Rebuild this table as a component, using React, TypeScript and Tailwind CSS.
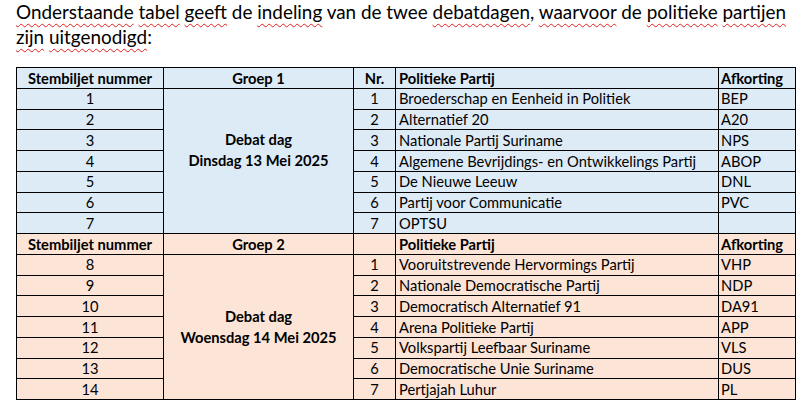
import React from 'react';

type Row = { nr: number; party: string; abbr: string };

const group1: Row[] = [
  { nr: 1, party: 'Broederschap en Eenheid in Politiek', abbr: 'BEP' },
  { nr: 2, party: 'Alternatief 20', abbr: 'A20' },
  { nr: 3, party: 'Nationale Partij Suriname', abbr: 'NPS' },
  { nr: 4, party: 'Algemene Bevrijdings- en Ontwikkelings Partij', abbr: 'ABOP' },
  { nr: 5, party: 'De Nieuwe Leeuw', abbr: 'DNL' },
  { nr: 6, party: 'Partij voor Communicatie', abbr: 'PVC' },
  { nr: 7, party: 'OPTSU', abbr: '' },
];

const group2: Row[] = [
  { nr: 1, party: 'Vooruitstrevende Hervormings Partij', abbr: 'VHP' },
  { nr: 2, party: 'Nationale Democratische Partij', abbr: 'NDP' },
  { nr: 3, party: 'Democratisch Alternatief 91', abbr: 'DA91' },
  { nr: 4, party: 'Arena Politieke Partij', abbr: 'APP' },
  { nr: 5, party: 'Volkspartij Leefbaar Suriname', abbr: 'VLS' },
  { nr: 6, party: 'Democratische Unie Suriname', abbr: 'DUS' },
  { nr: 7, party: 'Pertjajah Luhur', abbr: 'PL' },
];

// spelling squiggle under a word
const Sq: React.FC<{ children: React.ReactNode }> = ({ children }) => (
  <span className="underline decoration-wavy decoration-[#e02020] decoration-1 underline-offset-[4px]">
    {children}
  </span>
);

const td = 'border border-black p-0 h-[20.75px] leading-none whitespace-nowrap';

const Group: React.FC<{
  title: string;
  day: string;
  rows: Row[];
  start: number;
  bg: string;
  showNr: boolean;
  extraLine: boolean;
}> = ({ title, day, rows, start, bg, showNr, extraLine }) => (
  <>
    <tr className={bg}>
      <td className={`${td} text-center font-bold`}>Stembiljet nummer</td>
      <td className={`${td} text-center font-bold`}>{title}</td>
      <td className={`${td} text-center font-bold`}>{showNr ? 'Nr.' : ''}</td>
      <td className={`${td} pl-[3px] font-bold`}>Politieke Partij</td>
      <td className={`${td} pl-[2px] font-bold`}>Afkorting</td>
    </tr>
    {rows.map((r, i) => (
      <tr key={r.nr} className={bg}>
        <td className={`${td} text-center`}>{start + i}</td>
        {i === 0 && (
          <td rowSpan={rows.length} className={`${td} text-center align-middle font-bold`}>
            <div className="leading-[21px]">Debat dag</div>
            <div className="leading-[21px]">{day}</div>
            {extraLine && <div className="leading-[21px]">&nbsp;</div>}
          </td>
        )}
        <td className={`${td} text-center`}>{r.nr}</td>
        <td className={`${td} pl-[3px]`}>{r.party}</td>
        <td className={`${td} pl-[2px]`}>{r.abbr}</td>
      </tr>
    ))}
  </>
);

export default function App() {
  return (
    <div
      className="w-[801px] h-[405px] overflow-hidden bg-white px-[16px] text-black"
      style={{ fontFamily: 'Lato, "Open Sans", sans-serif' }}
    >
      <div className="text-[18.9px] whitespace-nowrap">
        <p className="leading-[23px]">
          <Sq>Onderstaande</Sq> <Sq>tabel</Sq> <Sq>geeft</Sq> de <Sq>indeling</Sq> van de twee{' '}
          <Sq>debatdagen</Sq>, <Sq>waarvoor</Sq> de <Sq>politieke</Sq> <Sq>partijen</Sq>
        </p>
        <p className="leading-[27.4px]">
          <Sq>zijn</Sq> <Sq>uitgenodigd</Sq>:
        </p>
      </div>
      <table className="mt-[16.6px] border-collapse text-[14.7px] table-fixed w-[779px]">
        <colgroup>
          <col className="w-[147px]" />
          <col className="w-[190px]" />
          <col className="w-[42px]" />
          <col className="w-[323px]" />
          <col className="w-[77px]" />
        </colgroup>
        <tbody>
          <Group
            title="Groep 1"
            day="Dinsdag 13 Mei 2025"
            rows={group1}
            start={1}
            bg="bg-[#ddebf7]"
            showNr
            extraLine
          />
          <Group
            title="Groep 2"
            day="Woensdag 14 Mei 2025"
            rows={group2}
            start={8}
            bg="bg-[#fce4d6]"
            showNr={false}
            extraLine={false}
          />
        </tbody>
      </table>
    </div>
  );
}
